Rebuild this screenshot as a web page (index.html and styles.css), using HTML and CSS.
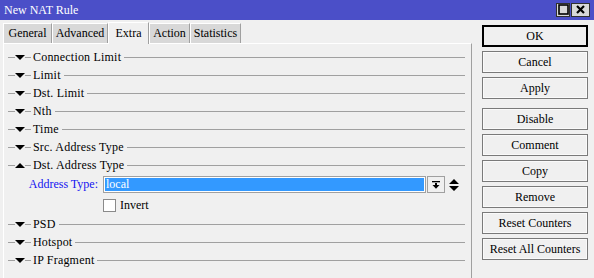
FILE: index.html
```html
<!DOCTYPE html>
<html>
<head>
<meta charset="utf-8">
<link rel="stylesheet" href="styles.css">
</head>
<body>
<div class="window">
  <div class="titlebar">
    <span class="title">New NAT Rule</span>
    <div class="wbtns">
      <span class="wbtn max"><svg width="11" height="11" viewBox="0 0 11 11"><rect x="1" y="1" width="9" height="9" fill="none" stroke="#000" stroke-width="1.6"/></svg></span>
      <span class="wbtn close"><svg width="11" height="11" viewBox="0 0 11 11"><path d="M2 2 L9 9 M9 2 L2 9" stroke="#000" stroke-width="2.2"/></svg></span>
    </div>
  </div>
  <div class="main">
    <div class="left">
      <div class="tabs">
        <div class="tab t-general">General</div>
        <div class="tab t-advanced">Advanced</div>
        <div class="tab t-extra active">Extra</div>
        <div class="tab t-action">Action</div>
        <div class="tab t-stats">Statistics</div>
      </div>
      <div class="panel">
        <div class="sec"><span class="lead"></span><span class="tri down"></span><span class="lead2"></span><span class="stext">Connection Limit</span><span class="fill"></span></div>
        <div class="sec"><span class="lead"></span><span class="tri down"></span><span class="lead2"></span><span class="stext">Limit</span><span class="fill"></span></div>
        <div class="sec"><span class="lead"></span><span class="tri down"></span><span class="lead2"></span><span class="stext">Dst. Limit</span><span class="fill"></span></div>
        <div class="sec"><span class="lead"></span><span class="tri down"></span><span class="lead2"></span><span class="stext">Nth</span><span class="fill"></span></div>
        <div class="sec"><span class="lead"></span><span class="tri down"></span><span class="lead2"></span><span class="stext">Time</span><span class="fill"></span></div>
        <div class="sec"><span class="lead"></span><span class="tri down"></span><span class="lead2"></span><span class="stext">Src. Address Type</span><span class="fill"></span></div>
        <div class="sec"><span class="lead"></span><span class="tri up"></span><span class="lead2"></span><span class="stext">Dst. Address Type</span><span class="fill"></span></div>
        <div class="field">
          <span class="flabel">Address Type:</span>
          <div class="input"><span class="sel">local</span></div>
          <span class="ddbtn"><svg width="8" height="8" viewBox="0 0 8 8"><rect x="0" y="0" width="8" height="1.3" fill="#000"/><rect x="3" y="2" width="2" height="2.5" fill="#000"/><path d="M0.5 4 L7.5 4 L4 7.8 Z" fill="#000"/></svg></span>
          <span class="updown"><svg width="10" height="12" viewBox="0 0 10 12"><path d="M0 5 L5 0 L10 5 Z M0 7 L10 7 L5 12 Z" fill="#000"/></svg></span>
        </div>
        <div class="check"><span class="box"></span><span>Invert</span></div>
        <div class="sec gap"><span class="lead"></span><span class="tri down"></span><span class="lead2"></span><span class="stext">PSD</span><span class="fill"></span></div>
        <div class="sec"><span class="lead"></span><span class="tri down"></span><span class="lead2"></span><span class="stext">Hotspot</span><span class="fill"></span></div>
        <div class="sec"><span class="lead"></span><span class="tri down"></span><span class="lead2"></span><span class="stext">IP Fragment</span><span class="fill"></span></div>
      </div>
    </div>
    <div class="buttons">
      <div class="btn ok">OK</div>
      <div class="btn">Cancel</div>
      <div class="btn">Apply</div>
      <div class="btn sep">Disable</div>
      <div class="btn">Comment</div>
      <div class="btn">Copy</div>
      <div class="btn">Remove</div>
      <div class="btn">Reset Counters</div>
      <div class="btn">Reset All Counters</div>
    </div>
  </div>
</div>
</body>
</html>
```
FILE: styles.css
```css
* { box-sizing: border-box; }
html, body {
  margin: 0;
  padding: 0;
  background: #f0f0f0;
  font-family: "Liberation Serif", "Times New Roman", serif;
  font-size: 12px;
  color: #000;
}
.window {
  width: 594px;
  height: 278px;
  overflow: hidden;
  display: flex;
  flex-direction: column;
}
.titlebar {
  height: 20px;
  background: #4b4fc8;
  display: flex;
  align-items: center;
  justify-content: space-between;
  padding: 0 4px 0 4px;
}
.title {
  color: #fff;
  font-size: 12px;
  line-height: 20px;
}
.wbtns {
  display: flex;
  gap: 1px;
  margin-top: -1px;
}
.wbtn {
  width: 14px;
  height: 14px;
  background: #d8d8d8;
  border: 1px solid #303030;
  display: flex;
  align-items: center;
  justify-content: center;
}
.wbtn.close { width: 19px; }
.main {
  flex: 1;
  display: flex;
}
.left {
  width: 472px;
  padding-left: 3px;
  display: flex;
  flex-direction: column;
}
.tabs {
  display: flex;
  height: 23px;
  padding-top: 3px;
  align-items: flex-end;
  position: relative;
  z-index: 1;
}
.tab {
  height: 20px;
  line-height: 19px;
  padding: 0;
  text-align: center;
  background: #d8d8d8;
  border-top: 1px solid #fff;
  border-left: 1px solid #fff;
  border-right: 1px solid #a0a0a0;
  white-space: nowrap;
}
.t-general { width: 49px; }
.t-advanced { width: 56px; }
.t-extra { width: 41px; }
.t-action { width: 41px; }
.t-stats { width: 51px; }
.tab.active {
  height: 22px;
  margin-top: -2px;
  margin-bottom: -1px;
  line-height: 20px;
  background: #f0f0f0;
}
.panel {
  flex: 1;
  border-top: 1px solid #fff;
  border-left: 1px solid #fff;
  border-right: 1px solid #a0a0a0;
  padding: 4px 6px 0 4px;
}
.sec {
  height: 18px;
  display: flex;
  align-items: center;
}
.sec.gap { margin-top: 3px; }
.lead { width: 7px; height: 1px; background: #a0a0a0; }
.lead2 { width: 6px; height: 1px; background: #a0a0a0; }
.fill { flex: 1; height: 1px; background: #a0a0a0; margin-left: 3px; }
.stext { margin-left: 2px; white-space: nowrap; letter-spacing: 0.2px; }
.tri {
  width: 0;
  height: 0;
  border-left: 5px solid transparent;
  border-right: 5px solid transparent;
}
.tri.down { border-top: 5px solid #000; }
.tri.up { border-bottom: 5px solid #000; }
.field {
  margin-top: 2px;
  height: 17px;
  display: flex;
  align-items: center;
}
.flabel {
  width: 90px;
  text-align: right;
  color: #1414f0;
  white-space: nowrap;
  margin-right: 5px;
}
.input {
  width: 323px;
  height: 17px;
  border: 1px solid #a0a0a0;
  padding: 1px;
  background: #fff;
}
.sel {
  display: block;
  height: 13px;
  line-height: 13px;
  background: #3399ff;
  color: #fff;
  padding-left: 1px;
}
.ddbtn {
  width: 18px;
  height: 17px;
  margin-left: 1px;
  border: 1px solid #a0a0a0;
  display: flex;
  align-items: center;
  justify-content: center;
}
.updown {
  margin-left: 4px;
  display: flex;
  align-items: center;
}
.check {
  margin-top: 6px;
  height: 13px;
  display: flex;
  align-items: center;
  padding-left: 95px;
}
.box {
  width: 13px;
  height: 13px;
  background: #fff;
  border: 1px solid #8a8a8a;
  margin-right: 4px;
}
.buttons {
  padding: 5px 0 0 10px;
  display: flex;
  flex-direction: column;
  gap: 4px;
}
.btn {
  width: 106px;
  height: 22px;
  border: 1px solid #7a7a7a;
  box-shadow: inset 0 0 0 1px #fafafa;
  background: #f0f0f0;
  text-align: center;
  line-height: 20px;
  white-space: nowrap;
}
.btn.ok {
  border: 2px solid #000;
  box-shadow: none;
  line-height: 18px;
}
.btn.sep { margin-top: 5px; }
```
